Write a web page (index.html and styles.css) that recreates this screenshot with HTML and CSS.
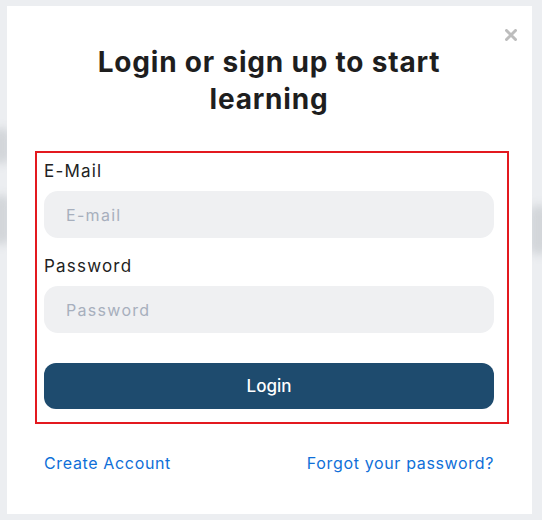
FILE: index.html
```html
<!DOCTYPE html>
<html lang="en">
<head>
    <meta charset="UTF-8" />
    <title>Login</title>
    <link rel="stylesheet" href="styles.css">
</head>
<body>
<div class="blob blob-a"></div>
<div class="blob blob-b"></div>
<div class="blob blob-c"></div>
<div class="modal">
    <button class="close" type="button" aria-label="Close">
        <svg width="12" height="12" viewBox="0 0 12 12"><path d="M1.5 1.5 L10.5 10.5 M10.5 1.5 L1.5 10.5" stroke="#bdbdbd" stroke-width="3" stroke-linecap="round"/></svg>
    </button>
    <h1>Login or sign up to start learning</h1>
    <form id="loginForm" class="login-form">
        <label for="email">E-Mail</label>
        <input type="email" id="email" name="email" placeholder="E-mail" />
        <label for="password">Password</label>
        <input type="password" id="password" name="password" placeholder="Password" />
        <button type="submit" class="login-button">Login</button>
    </form>
    <div class="links">
        <a href="#">Create Account</a>
        <a href="#">Forgot your password?</a>
    </div>
</div>
</body>
</html>
```

FILE: styles.css
```css
body {
    margin: 0;
    padding: 6px 10px 6px 7px;
    background-color: #eceef1;
    font-family: 'Inter', 'Roboto', sans-serif;
    height: 520px;
    box-sizing: border-box;
    overflow: hidden;
}

/* faint blurred page behind the modal */
.blob {
    position: absolute;
    background-color: #d3d6da;
    filter: blur(4px);
    border-radius: 10px;
}

.blob-a {
    top: 128px;
    left: -10px;
    width: 22px;
    height: 36px;
}

.blob-b {
    top: 195px;
    left: -10px;
    width: 22px;
    height: 50px;
}

.blob-c {
    top: 205px;
    right: -8px;
    width: 22px;
    height: 50px;
}

.modal {
    position: relative;
    background-color: #ffffff;
    width: 525px;
    height: 508px;
    box-sizing: border-box;
    padding: 38px 38px 0 37px;
}

.close {
    position: absolute;
    top: 23px;
    right: 15px;
    border: none;
    background: none;
    padding: 0;
    line-height: 0;
    cursor: pointer;
}

h1 {
    margin: 0 auto;
    width: 400px;
    text-align: center;
    font-size: 28px;
    line-height: 37px;
    font-weight: 700;
    color: #1e1e1e;
    letter-spacing: 0.8px;
}

.login-form {
    display: flex;
    flex-direction: column;
    margin: 33px -15px 0 -9px;
    padding: 6px 13px 13px 7px;
    border: 2px solid #e3191f;
}

label {
    font-size: 17px;
    color: #222222;
    line-height: 24px;
    margin-bottom: 8px;
    letter-spacing: 1.2px;
}

input {
    height: 47px;
    box-sizing: border-box;
    border: none;
    border-radius: 14px;
    background-color: #eff0f2;
    padding: 0 22px;
    font-family: inherit;
    font-size: 16px;
    letter-spacing: 1.3px;
    color: #222222;
    margin-bottom: 16px;
}

input::placeholder {
    color: #a7afbd;
}

.login-button {
    height: 46px;
    margin-top: 14px;
    border: none;
    border-radius: 12px;
    background-color: #1e4b6e;
    color: #ffffff;
    font-family: inherit;
    font-size: 17px;
    font-weight: 500;
    cursor: pointer;
}

.links {
    display: flex;
    justify-content: space-between;
    margin-top: 29px;
}

.links a {
    color: #0f6fd8;
    text-decoration: none;
    font-size: 16px;
    letter-spacing: 0.65px;
}
```
